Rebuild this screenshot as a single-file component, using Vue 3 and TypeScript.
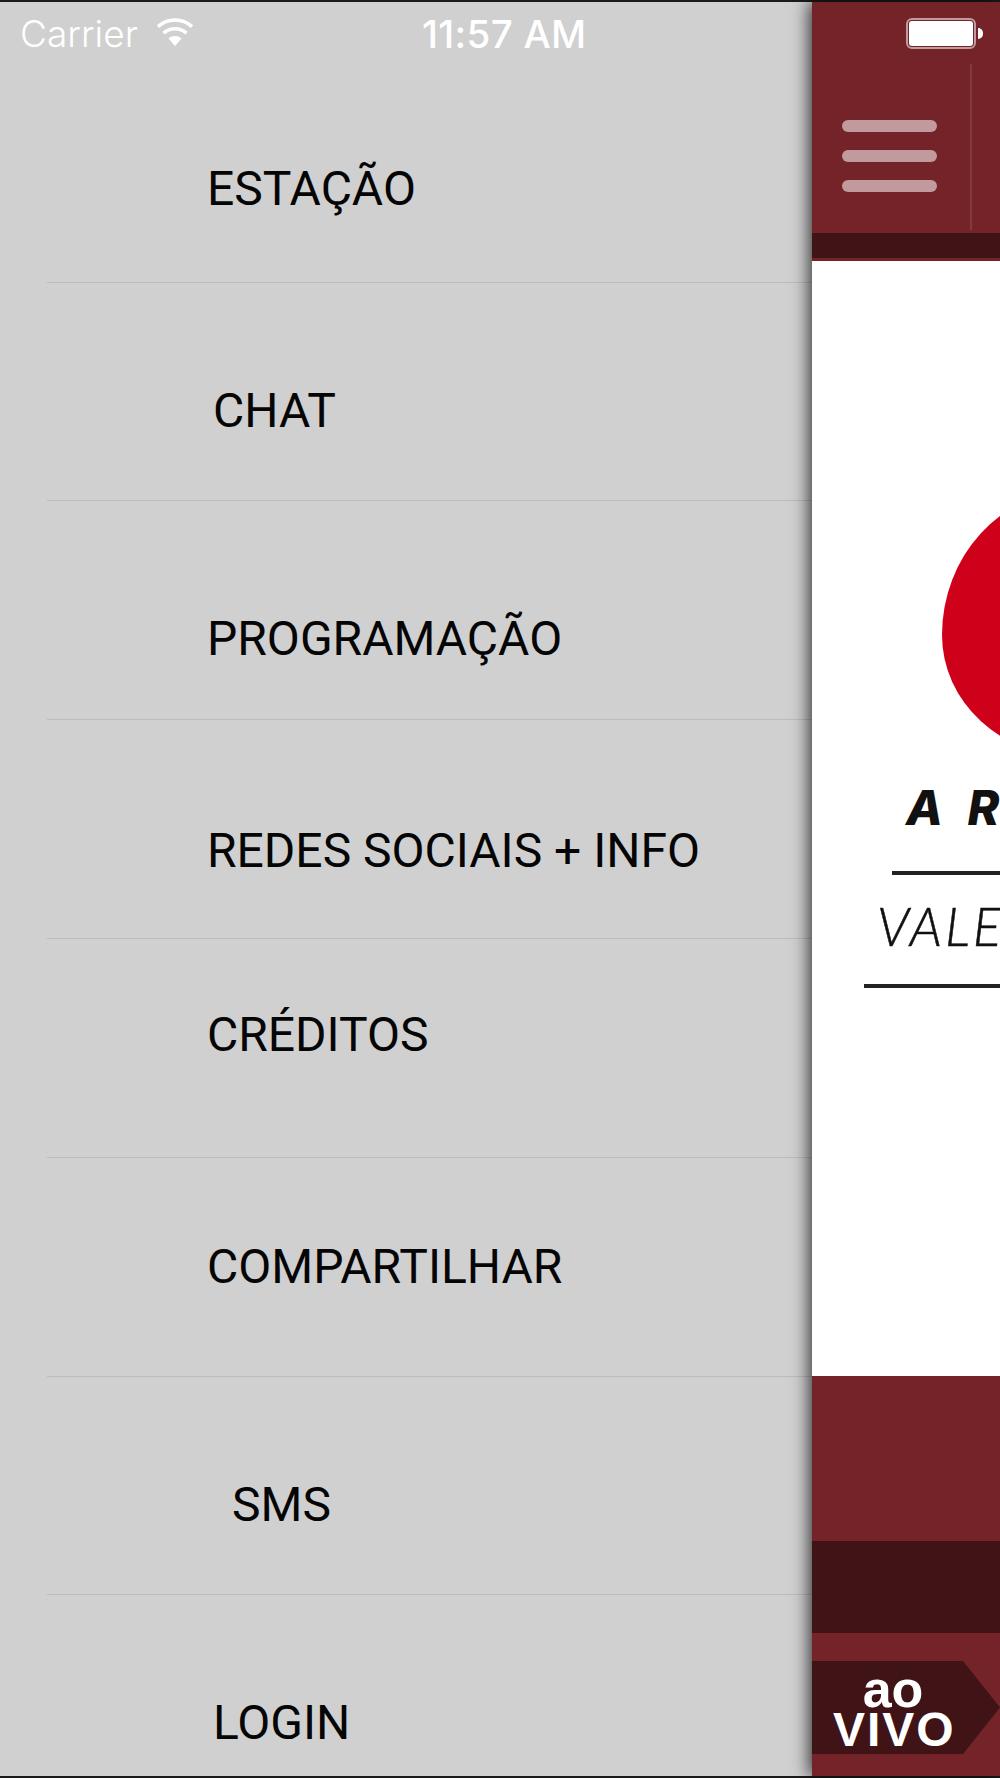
<script setup lang="ts">
interface MenuItem { label: string; height: number; top: number; left: number }
const items: MenuItem[] = [
  { label: 'ESTAÇÃO', height: 281, top: 161, left: 160 },
  { label: 'CHAT', height: 218, top: 102, left: 166 },
  { label: 'PROGRAMAÇÃO', height: 219, top: 112, left: 160 },
  { label: 'REDES SOCIAIS + INFO', height: 219, top: 105, left: 160 },
  { label: 'CRÉDITOS', height: 219, top: 70, left: 160 },
  { label: 'COMPARTILHAR', height: 219, top: 83, left: 160 },
  { label: 'SMS', height: 218, top: 102, left: 185 },
  { label: 'LOGIN', height: 181, top: 102, left: 166 }
]
</script>

<template>
  <div class="page">
    <nav class="menu">
      <div
        v-for="(item, i) in items"
        :key="item.label"
        class="row"
        :class="{ last: i === items.length - 1 }"
        :style="{ height: item.height + 'px', paddingTop: item.top + 'px', paddingLeft: item.left + 'px' }"
      >
        <span class="label">{{ item.label }}</span>
      </div>
    </nav>

    <section class="panel">
      <header class="topbar">
        <div class="burger">
          <i></i><i></i><i></i>
        </div>
        <div class="divider"></div>
      </header>
      <div class="strip"></div>
      <main class="content">
        <div class="logo">
          <div class="disc"></div>
          <div class="slogan">A R</div>
          <div class="rule rule-one"></div>
          <div class="place">VALE</div>
          <div class="rule rule-two"></div>
        </div>
      </main>
      <div class="player"></div>
      <div class="player-dark"></div>
      <footer class="footer">
        <div class="live">
          <span class="ao">ao</span>
          <span class="vivo">VIVO</span>
        </div>
      </footer>
    </section>

    <div class="status">
      <div class="status-left">
        <span>Carrier</span>
        <svg class="wifi" viewBox="0 0 38 28" width="38" height="28" aria-hidden="true">
          <path d="M19 28 12.4 20.6a10 10 0 0 1 13.2 0Z" fill="#fff" />
          <path d="M7.5 15.2a17.2 17.2 0 0 1 23 0" fill="none" stroke="#fff" stroke-width="3.6" />
          <path d="M2 8.6a25.4 25.4 0 0 1 34 0" fill="none" stroke="#fff" stroke-width="3.6" />
        </svg>
      </div>
      <span class="time">11:57 AM</span>
      <div class="battery">
        <div class="cell"><div class="charge"></div></div>
        <div class="nub"></div>
      </div>
    </div>
  </div>
</template>

<style>
html, body { margin: 0; background: #000; }
</style>

<style scoped>
.page {
  position: relative;
  display: flex;
  width: 1000px;
  height: 1778px;
  box-sizing: border-box;
  padding: 2px 0;
  overflow: hidden;
  background: #1a1a1a;
  font-family: Roboto, "Liberation Sans", Arial, sans-serif;
}
.menu {
  flex: 0 0 812px;
  background: #d0d0d0;
  display: flex;
  flex-direction: column;
}
.row {
  box-sizing: border-box;
  position: relative;
  flex: none;
  border-bottom: 1px solid #bcbcbc;
  margin-left: 47px;
}
.row.last { border-bottom: 0; }
.label {
  display: block;
  font-size: 48px;
  line-height: 52px;
  color: #050505;
  white-space: nowrap;
}
.panel {
  position: relative;
  flex: 0 0 188px;
  display: flex;
  flex-direction: column;
  background: #742328;
  box-shadow: -3px 0 16px rgba(0, 0, 0, 0.75);
}
.topbar {
  flex: 0 0 231px;
  box-sizing: border-box;
  padding-top: 62px;
  display: flex;
  align-items: flex-start;
}
.burger {
  width: 95px;
  margin: 56px 0 0 30px;
  display: flex;
  flex-direction: column;
  gap: 18px;
}
.burger i {
  display: block;
  height: 12px;
  border-radius: 6px;
  background: #c09a9c;
}
.divider {
  width: 2px;
  height: 166px;
  margin-left: 33px;
  background: #833a3f;
}
.strip { flex: 0 0 25px; background: #401316; margin-bottom: 3px; }
.content {
  position: relative;
  flex: 1;
  background: #fff;
  overflow: hidden;
}
.logo { position: absolute; inset: 0; }
.disc {
  position: absolute;
  left: 130px;
  top: 230px;
  width: 266px;
  height: 266px;
  border-radius: 133px / 144px 144px 122px 122px;
  background: #cf0019;
}
.slogan {
  position: absolute;
  left: 94px;
  top: 519px;
  font-family: Inter, "Liberation Sans", sans-serif;
  font-size: 48px;
  line-height: 56px;
  font-weight: 800;
  font-style: italic;
  letter-spacing: 7px;
  color: #111;
  white-space: pre;
}
.rule { position: absolute; height: 4px; right: 0; background: #222; }
.rule-one { left: 80px; top: 610px; }
.rule-two { left: 52px; top: 723px; }
.place {
  position: absolute;
  left: 65px;
  top: 635px;
  font-family: Lato, "Liberation Sans", sans-serif;
  font-size: 53px;
  line-height: 60px;
  font-weight: 300;
  font-style: italic;
  color: #111;
  letter-spacing: 3px;
  -webkit-text-stroke: 0.5px #111;
}
.player { flex: 0 0 165px; }
.player-dark { flex: 0 0 92px; background: #401316; }
.footer { flex: 0 0 143px; padding-top: 28px; box-sizing: border-box; }
.live {
  width: 188px;
  height: 93px;
  box-sizing: border-box;
  padding: 9px 0 0 21px;
  background: #401316;
  clip-path: polygon(0 0, 151px 0, 188px 50%, 151px 100%, 0 100%);
  color: #fff;
  display: flex;
  flex-direction: column;
  font-family: "Liberation Sans", Arial, sans-serif;
  font-weight: 700;
}
.ao { width: 120px; text-align: center; font-size: 52px; line-height: 38px; }
.vivo { width: 120px; margin-top: 3px; text-align: center; font-size: 48px; line-height: 37px; letter-spacing: 2px; }
.status {
  position: absolute;
  left: 0;
  right: 0;
  top: 2px;
  height: 64px;
  color: #fff;
  line-height: 64px;
}
.status-left {
  position: absolute;
  left: 20px;
  top: 0;
  display: flex;
  align-items: flex-start;
  gap: 18px;
  font-family: Inter, sans-serif;
  font-size: 37px;
  font-weight: 300;
}
.wifi { margin-top: 16px; }
.time {
  position: absolute;
  left: 422px;
  top: 0;
  font-family: Inter, sans-serif;
  font-size: 38.5px;
  letter-spacing: 0.3px;
  font-weight: 500;
  white-space: nowrap;
}
.battery {
  position: absolute;
  left: 906px;
  top: 16px;
  display: flex;
  align-items: center;
  gap: 2px;
}
.cell {
  width: 70px;
  height: 31px;
  box-sizing: border-box;
  padding: 1px;
  border: 2px solid #c09a9c;
  border-radius: 6px;
}
.charge { width: 100%; height: 100%; background: #fff; border-radius: 3px; }
.nub { width: 5px; height: 11px; background: #fff; border-radius: 0 5px 5px 0; }
</style>
